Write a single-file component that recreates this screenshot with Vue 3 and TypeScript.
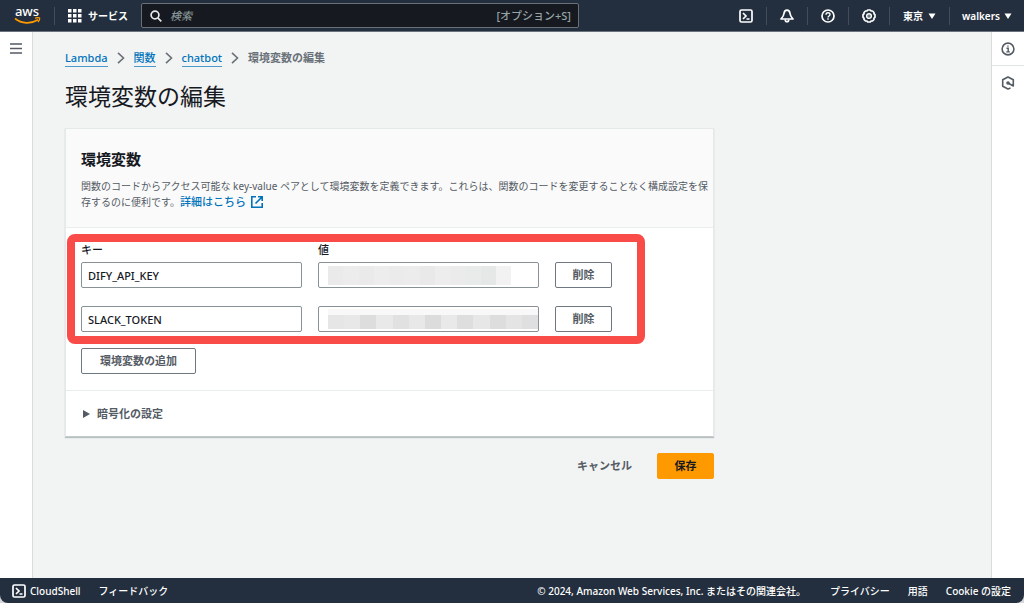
<script setup lang="ts">
import { ref } from 'vue'

interface Variable {
  key: string
  mask: string
  tiles: string[]
}

const crumbs = ['Lambda', '関数', 'chatbot']

const variables = ref<Variable[]>([
  {
    key: 'DIFY_API_KEY',
    mask: 'mask-short',
    tiles: ['#eaeaea', '#ececec', '#eaeaea', '#ededed', '#ebebeb', '#ececec', '#e9e9e9', '#ededed', '#ebebeb', '#e9eaea', '#e6e7e7', '#f2f2f2'],
  },
  {
    key: 'SLACK_TOKEN',
    mask: 'mask-long',
    tiles: ['#e6e6e6', '#e8e8e8', '#dddddd', '#e9e9e9', '#e1e1e1', '#e8e8e8', '#dcdcdc', '#e9e9e9', '#dedede', '#e7e7e7', '#dddddd', '#e4e4e4', '#dfdfdf'],
  },
])

const query = ref('')
const expanded = ref(false)
</script>

<template>
  <div class="console">
    <header class="topbar">
      <a class="logo" href="#" aria-label="aws">
        <span class="logo-word">aws</span>
        <svg class="smile" width="27" height="8" viewBox="0 0 27 8" fill="none" stroke="#ff9900" aria-hidden="true">
          <path d="M1 1.5C7.5 6.8 17 7.2 24 2.8" stroke-width="1.7" />
          <path d="M21 1.2c2-.6 4-.7 4.4-.2s-.1 2.400-1.400 4" stroke-width="1.300" />
        </svg>
      </a>
      <button class="services" type="button">
        <svg width="14" height="14" viewBox="0 0 14 14" fill="#fff" aria-hidden="true">
          <path d="M0 0h3.500v3.500H0zM5 0h3.500v3.500H5zM10 0h3.500v3.500H10zM0 5h3.500v3.500H0zM5 5h3.500v3.500H5zM10 5h3.500v3.500H10zM0 10h3.500v3.500H0zM5 10h3.500v3.500H5zM10 10h3.500v3.500H10z" />
        </svg>
        <span>サービス</span>
      </button>
      <label class="search">
        <svg width="12" height="12" viewBox="0 0 12 12" fill="none" stroke="#e6e9ea" stroke-width="1.700" aria-hidden="true">
          <circle cx="5" cy="5" r="3.900" />
          <path d="M7.800 7.800l3.500 3.500" />
        </svg>
        <input v-model="query" type="search" placeholder="検索" aria-label="検索" />
        <span class="shortcut">[オプション+S]</span>
      </label>
      <nav class="tools">
        <button type="button" aria-label="CloudShell">
          <svg width="14" height="14" viewBox="0 0 14 14" fill="none" stroke="#fff" stroke-width="1.700" aria-hidden="true">
            <rect x="1" y="1" width="12" height="12" rx="1.500" />
            <path d="M4 4l3 3-3 3M7.500 10h3" />
          </svg>
        </button>
        <button type="button" aria-label="Notifications">
          <svg width="14" height="14" viewBox="0 0 14 14" fill="none" stroke="#fff" stroke-width="1.700" stroke-linejoin="round" aria-hidden="true">
            <path d="M7 1.200C5 1.200 4.200 2.800 4 4.500 3.700 7 2.500 8.200 1 10h12c-1.500-1.800-2.700-3-3-5.500C9.800 2.800 9 1.200 7 1.200z" />
            <path d="M5.200 10.500c0 3 3.600 3 3.600 0" />
          </svg>
        </button>
        <button type="button" aria-label="Help">
          <svg width="14" height="14" viewBox="0 0 14 14" fill="none" stroke="#fff" stroke-width="1.700" aria-hidden="true">
            <circle cx="7" cy="7" r="6" />
            <path d="M5 5.800C5 3 9 3.100 9 5.500c0 1.500-2 1.400-2 3M7 9.300v1.400" stroke-width="1.400" />
          </svg>
        </button>
        <button type="button" aria-label="Settings">
          <svg width="14" height="14" viewBox="0 0 14 14" fill="none" stroke="#fff" aria-hidden="true">
            <path d="M5.700 1h2.600l.8 1 1.400 0 1.500 1.500v1.400l1 .8v2.600l-1 .8v1.400L10.500 12H9.100l-.8 1H5.700l-.8-1H3.500L2 10.500V9.100l-1-.8V5.700l1-.8V3.500L3.500 2h1.400z" stroke-width="1.700" stroke-linejoin="round" />
            <circle cx="7" cy="7" r="2.300" stroke-width="1.500" />
            <circle cx="7" cy="7" r=".7" fill="#fff" stroke="none" />
          </svg>
        </button>
        <button class="region" type="button">
          <span>東京</span>
          <svg class="caret" width="8" height="6" viewBox="0 0 8 6" fill="#fff" aria-hidden="true"><path d="M.5.5h7L4 6z" /></svg>
        </button>
        <button class="account" type="button">
          <span>walkers</span>
          <svg class="caret" width="8" height="6" viewBox="0 0 8 6" fill="#fff" aria-hidden="true"><path d="M.5.5h7L4 6z" /></svg>
        </button>
      </nav>
    </header>

    <div class="workspace">
      <aside class="rail rail-left">
        <button type="button" aria-label="Menu">
          <svg width="12" height="11" viewBox="0 0 12 11" stroke="#545b64" stroke-width="1.500" aria-hidden="true">
            <path d="M0 1h12M0 5.500h12M0 10h12" />
          </svg>
        </button>
      </aside>

      <main class="content">
        <nav class="crumbs" aria-label="Breadcrumb">
          <template v-for="crumb in crumbs" :key="crumb">
            <a href="#">{{ crumb }}</a>
            <svg width="8" height="12" viewBox="0 0 8 12" fill="none" stroke="#687078" stroke-width="1.600" aria-hidden="true">
              <path d="M1 .8L6.500 6 1 11.200" />
            </svg>
          </template>
          <span>環境変数の編集</span>
        </nav>
        <h1>環境変数の編集</h1>

        <form @submit.prevent>
          <section class="card">
            <div class="card-head">
              <h2>環境変数</h2>
              <p>
                関数のコードからアクセス可能な key-value ペアとして環境変数を定義できます。これらは、関数のコードを変更することなく構成設定を保<br />存するのに便利です。<a href="#">詳細はこちら<svg width="12" height="12" viewBox="0 0 12 12" fill="none" stroke="#0073bb" stroke-width="1.600" aria-hidden="true">
                  <path d="M5 .8H.8v10.400h10.400V7M7 .8h4.200V5M11 1L4.500 7.500" />
                </svg></a>
              </p>
            </div>

            <div class="card-body">
              <div class="fields">
                <span class="label">キー</span>
                <span class="label value-label">値</span>
                <template v-for="(item, i) in variables" :key="i">
                  <input v-model="item.key" class="box" type="text" aria-label="キー" />
                  <div class="secret">
                    <input class="box" type="text" aria-label="値" />
                    <div class="mask" :class="item.mask">
                      <i v-for="(tile, n) in item.tiles" :key="n" :style="{ background: tile }"></i>
                    </div>
                  </div>
                  <button class="btn" type="button">削除</button>
                </template>
                <div class="highlight"></div>
              </div>
              <button class="btn add" type="button">環境変数の追加</button>
            </div>

            <div class="card-foot">
              <button type="button" :aria-expanded="expanded" @click="expanded = !expanded">
                <svg width="7" height="8" viewBox="0 0 7 8" fill="#545b64" aria-hidden="true"><path d="M0 0l7 4-7 4z" /></svg>
                <span>暗号化の設定</span>
              </button>
            </div>
          </section>

          <div class="actions">
            <button class="btn plain" type="button">キャンセル</button>
            <button class="btn primary" type="submit">保存</button>
          </div>
        </form>
      </main>

      <aside class="rail rail-right">
        <button type="button" aria-label="Info">
          <svg width="14" height="14" viewBox="0 0 14 14" fill="none" stroke="#545b64" stroke-width="1.600" aria-hidden="true">
            <circle cx="7" cy="7" r="5.900" />
            <path d="M5.500 6.300h1.700v3.400M5.300 9.900h3.500M6.300 4.100h1.300" stroke-width="1.400" />
          </svg>
        </button>
        <button type="button" aria-label="Tutorials">
          <svg width="14" height="14" viewBox="0 0 14 14" fill="none" stroke="#545b64" stroke-width="1.600" aria-hidden="true">
            <path d="M9.500 12L7 13 1.700 10.200V3.800L7 1l5.300 2.800v6.200L7 7" stroke-linejoin="round" />
            <circle cx="7" cy="7" r="1.800" fill="#545b64" stroke="none" />
          </svg>
        </button>
      </aside>
    </div>

    <div class="base">
      <footer class="bottombar">
        <button class="shell" type="button">
          <svg width="14" height="14" viewBox="0 0 14 14" fill="none" stroke="#fff" stroke-width="1.700" aria-hidden="true">
            <rect x="1" y="1" width="12" height="12" rx="1.500" />
            <path d="M4 4l3 3-3 3M7.500 10h3" />
          </svg>
          <span>CloudShell</span>
        </button>
        <a href="#">フィードバック</a>
        <span class="legal">© 2024, Amazon Web Services, Inc. またはその関連会社。</span>
        <a class="privacy" href="#">プライバシー</a>
        <a href="#">用語</a>
        <a href="#">Cookie の設定</a>
      </footer>
    </div>
  </div>
</template>

<style>
body {
  margin: 0;
}
</style>

<style scoped>
.console {
  display: flex;
  flex-direction: column;
  min-height: 100vh;
  background: #f2f3f3;
  color: #16191f;
  font-family: "Noto Sans", "Noto Sans CJK JP", sans-serif;
  font-size: 11px;
  line-height: 16px;
}
.console * {
  box-sizing: border-box;
}
button,
input {
  margin: 0;
  padding: 0;
  border: 0;
  background: none;
  color: inherit;
  font: inherit;
}
button {
  display: flex;
  align-items: center;
  justify-content: center;
  white-space: nowrap;
  cursor: pointer;
}
a {
  text-decoration: none;
}
svg {
  flex: none;
}

.topbar {
  display: flex;
  align-items: center;
  height: 32px;
  background: #232f3e;
  border-bottom: 1px solid #6b737d;
  color: #fff;
  font-size: 10px;
  font-weight: 600;
}
.logo {
  display: flex;
  flex-direction: column;
  align-items: center;
  width: 54px;
  color: #fff;
}
.logo-word {
  height: 11px;
  font-size: 13px;
  font-weight: 500;
  line-height: 11px;
}
.services {
  gap: 6px;
  height: 18px;
  padding: 0 13px;
  border-left: 1px solid #414d5c;
}
.search {
  display: flex;
  align-items: center;
  gap: 8px;
  flex: 0 1 438px;
  height: 25px;
  padding: 0 7px 0 8px;
  background: #16191f;
  border: 1px solid #687078;
  border-radius: 2px;
  color: #95a5a6;
  font-size: 11px;
  font-weight: 500;
}
.search input {
  flex: 1;
  min-width: 0;
  outline: none;
}
.search input::placeholder {
  color: #879596;
  font-style: italic;
  opacity: 1;
}
.shortcut {
  white-space: nowrap;
}
.tools {
  display: flex;
  margin-left: auto;
}
.tools button {
  width: 41px;
  height: 18px;
  border-left: 1px solid #414d5c;
}
.tools button:first-child {
  border-left-color: transparent;
}
.tools .region {
  width: 60px;
  gap: 5px;
}
.tools .account {
  width: 75px;
  gap: 4px;
}

.workspace {
  display: flex;
  flex: 1;
}
.rail {
  flex: none;
  width: 33px;
  background: #fff;
}
.rail button {
  width: 100%;
  height: 33px;
}
.rail-left {
  border-right: 1px solid #d9dcdd;
}
.rail-right {
  border-left: 1px solid #d9dcdd;
}
.rail-right button:first-child {
  height: 34px;
  border-bottom: 1px solid #e0e3e4;
}
.content {
  flex: 1;
  min-width: 0;
  padding: 18px 32px;
}
.crumbs {
  display: flex;
  align-items: center;
  gap: 9px;
  height: 16px;
  color: #687078;
  font-weight: 700;
}
.crumbs a {
  border-bottom: 1px solid #4a9acb;
  color: #0073bb;
  font-weight: 500;
}
h1 {
  margin: 15px 0 17px;
  font-size: 23px;
  font-weight: 400;
  line-height: 30px;
}
form {
  max-width: 649px;
}
.card {
  background: #fff;
  border: 1px solid #e6e9e9;
  border-bottom-color: #c4c9ca;
  box-shadow: 0 1px 1px #b9c0c0;
}
.card-head {
  height: 99px;
  padding: 20px 0 0 15px;
  background: #fafafa;
  border-bottom: 1px solid #eaeded;
}
h2 {
  margin: 0 0 9px;
  font-size: 15px;
  font-weight: 700;
  line-height: 20px;
}
p {
  margin: 0;
  color: #545b64;
  font-size: 10px;
  line-height: 16px;
  white-space: nowrap;
}
p a {
  color: #0073bb;
  font-size: 11px;
  font-weight: 500;
}
p svg {
  margin-left: 5px;
  vertical-align: -2px;
}
.card-body {
  padding: 14px 15px 16px;
  border-bottom: 1px solid #eaeded;
}
.fields {
  position: relative;
  display: grid;
  grid-template-columns: 221px 221px auto;
  width: fit-content;
  column-gap: 16px;
  row-gap: 18px;
}
.label {
  height: 16px;
  margin-bottom: -14px;
  font-weight: 500;
}
.value-label {
  grid-column: 2 / 4;
}
.box {
  width: 100%;
  height: 26px;
  padding: 0 6px;
  background: #fff;
  border: 1px solid #879196;
  border-radius: 2px;
  font-weight: 500;
}
.secret {
  position: relative;
}
.mask {
  position: absolute;
  display: flex;
  left: 10px;
}
.mask i {
  flex: 1;
}
.mask-short {
  top: 4px;
  right: 28px;
  bottom: 3px;
}
.mask-long {
  top: 3px;
  right: 1px;
  bottom: 3px;
  border-top: 6px solid #f8f8f8;
}
.highlight {
  position: absolute;
  inset: -8px -33px -12px -14px;
  border: 8px solid #f94b47;
  border-radius: 8px;
  pointer-events: none;
}
.btn {
  min-width: 57px;
  height: 26px;
  padding: 0 16px;
  background: #fff;
  border: 1px solid #6f7780;
  border-radius: 2px;
  color: #545b64;
  font-weight: 700;
}
.add {
  margin-top: 16px;
  padding: 0 18px;
}
.card-foot {
  display: flex;
  align-items: center;
  height: 45px;
  padding: 0 17px;
  color: #545b64;
  font-weight: 700;
}
.card-foot button {
  gap: 7px;
}
.actions {
  display: flex;
  justify-content: flex-end;
  gap: 8px;
  margin-top: 16px;
}
.plain {
  background: none;
  border-color: transparent;
}
.primary {
  background: #ff9900;
  border-color: #ff9900;
  color: #16191f;
}

.base {
  background: #d4d7d9;
}
.bottombar {
  display: flex;
  align-items: center;
  height: 25px;
  padding: 0 13px 0 12px;
  background: #232f3e;
  border-radius: 0 0 8px 8px;
  color: #fff;
  font-size: 10px;
  font-weight: 500;
  white-space: nowrap;
}
.bottombar a {
  margin-left: 18px;
  color: inherit;
}
.shell {
  gap: 4px;
}
.legal {
  margin-left: auto;
}
.bottombar .privacy {
  margin-left: 24px;
}
</style>
